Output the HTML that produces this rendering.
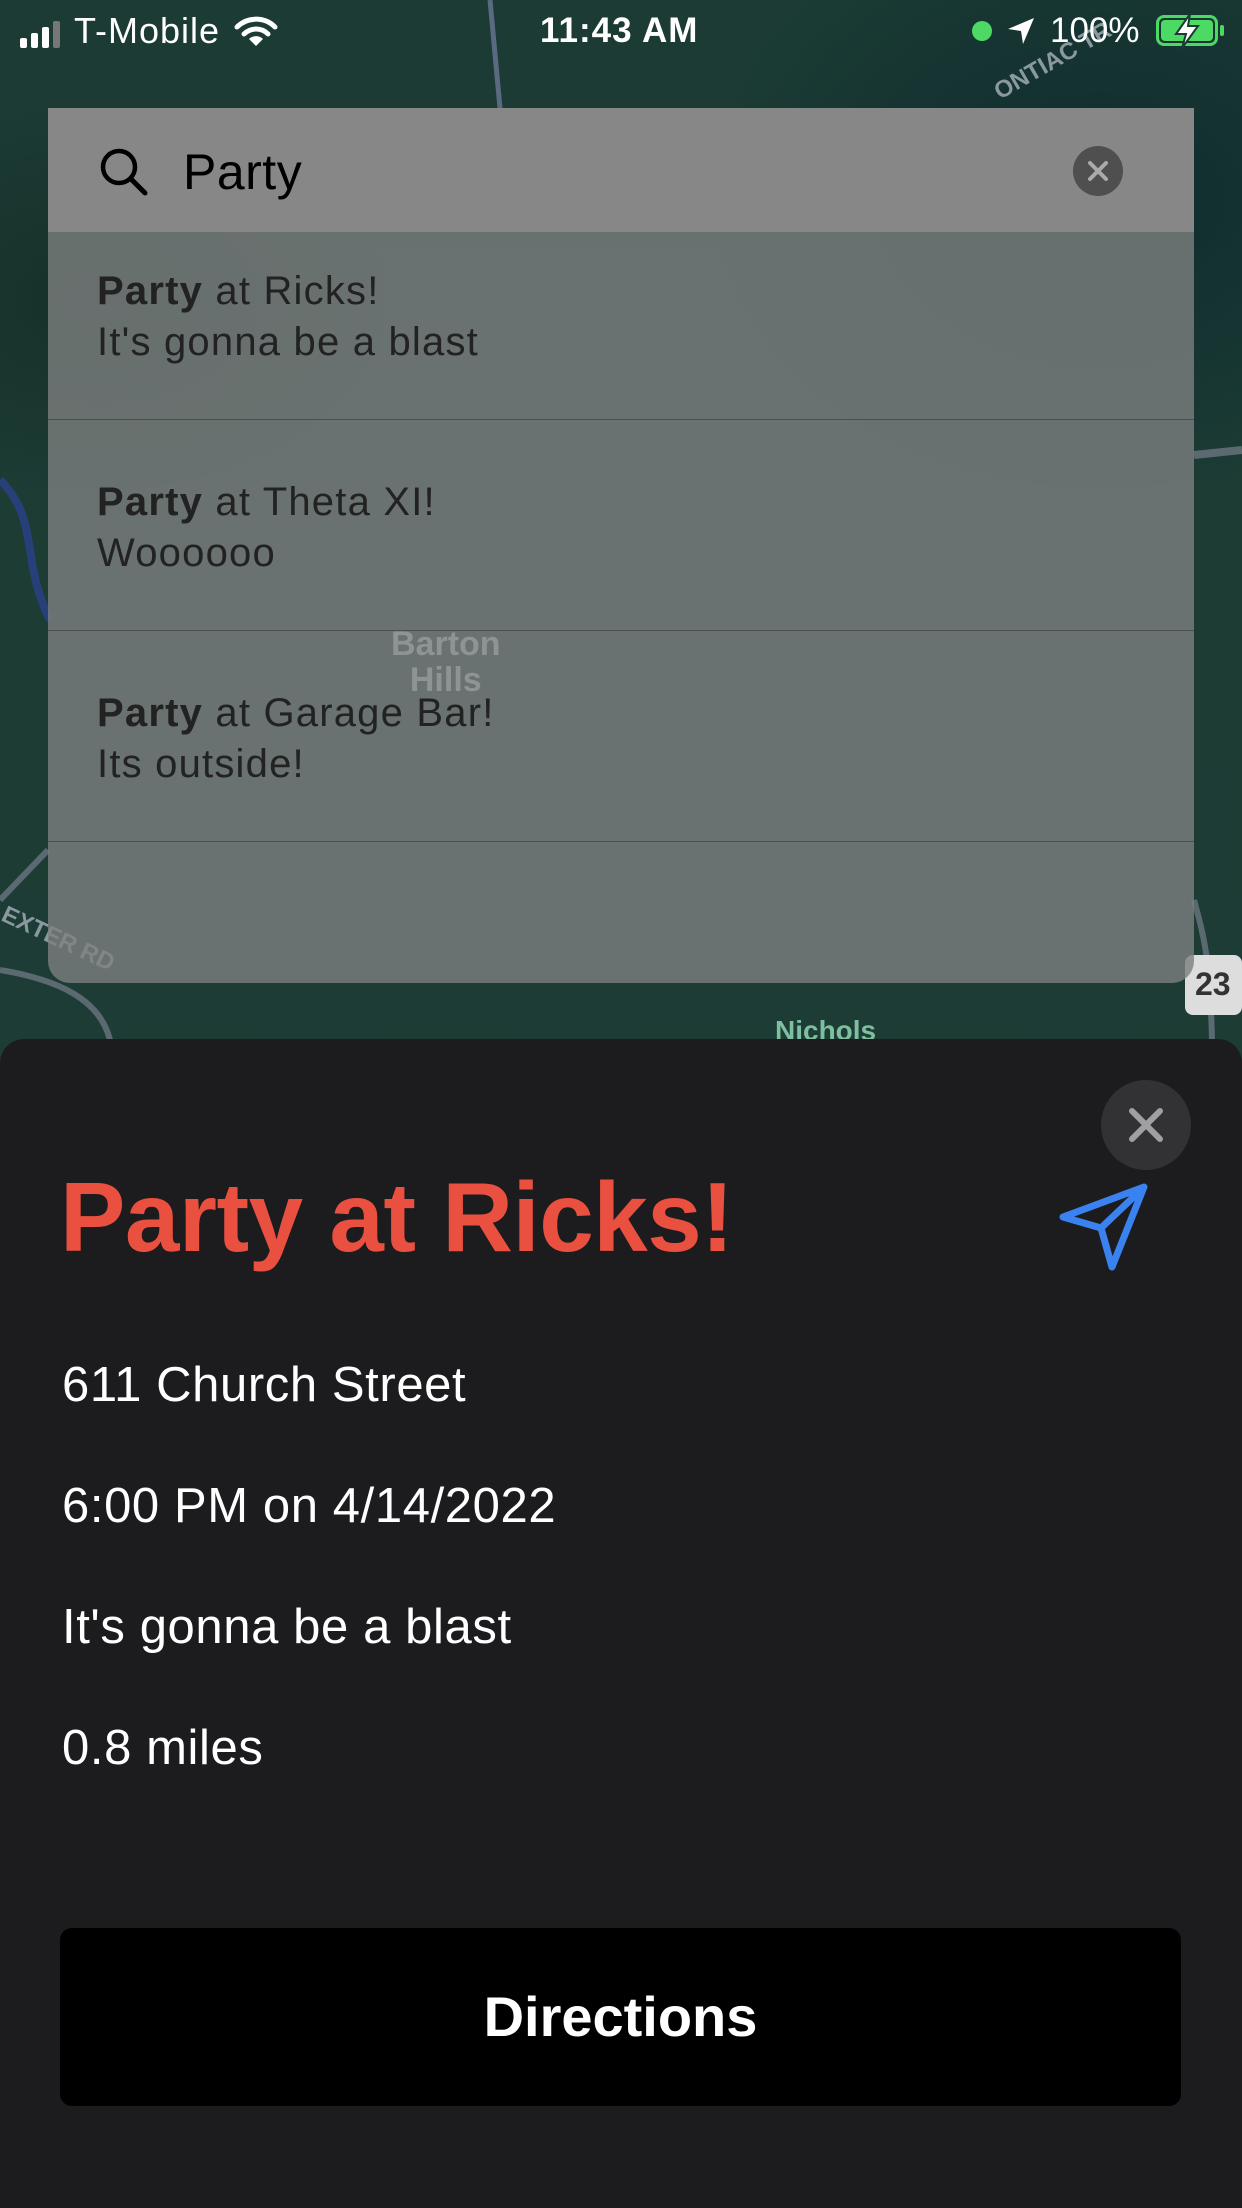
<!DOCTYPE html>
<html><head><meta charset="utf-8"><style>
*{margin:0;padding:0;box-sizing:border-box}
body{width:1242px;height:2208px;position:relative;overflow:hidden;font-family:"Liberation Sans",sans-serif;background:#1a3a33}
.map{position:absolute;inset:0;background:
radial-gradient(ellipse 300px 200px at 100px 300px,#163029,transparent),
radial-gradient(ellipse 400px 300px at 1100px 200px,#0f2c2e,transparent),
linear-gradient(180deg,#1b3b34,#1d3d35 60%,#183530)}
.abs{position:absolute}
.search{left:48px;top:108px;width:1146px;height:124px;background:#878787}
.results{left:48px;top:232px;width:1146px;height:751px;background:rgba(125,128,128,.8);border-radius:0 0 22px 22px}
.row{position:absolute;left:0;width:1146px;border-bottom:1.5px solid #4b4f50}
.rt{position:absolute;left:49px;font-size:40px;color:#222;line-height:51px;letter-spacing:1.2px}
.sheet{left:0;top:1039px;width:1242px;height:1169px;background:#1c1c1e;border-radius:24px 24px 0 0}
.info{position:absolute;left:62px;font-size:49px;color:#fff;letter-spacing:.6px}
</style></head><body>
<div class="map"></div>
<svg class="abs" style="left:0;top:0" width="1242" height="1050">
<path d="M0 480 C40 520 20 560 50 620" stroke="#27407a" stroke-width="8" fill="none"/>
<path d="M1194 455 L1242 450" stroke="#5a6a70" stroke-width="8"/>
<path d="M0 900 L48 850 M0 970 C60 980 100 1000 110 1040" stroke="#5a6a70" stroke-width="6" fill="none"/>
<path d="M490 0 L500 108" stroke="#5a6a80" stroke-width="5"/>
<path d="M1194 900 C1205 940 1210 960 1212 1040" stroke="#5a6a70" stroke-width="6" fill="none"/>
<rect x="1185" y="955" width="57" height="60" rx="8" fill="#ddd"/>
<text x="1195" y="995" font-family="Liberation Sans" font-weight="bold" font-size="32" fill="#333">23</text>
<text x="775" y="1040" font-family="Liberation Sans" font-weight="bold" font-size="28" fill="#7fbf9f">Nichols</text>
<text x="1000" y="100" font-family="Liberation Sans" font-weight="bold" font-size="24" fill="#8a99a0" transform="rotate(-30 1000 100)">ONTIAC TR</text>
<text x="0" y="920" font-family="Liberation Sans" font-weight="bold" font-size="24" fill="#8a99a0" transform="rotate(25 0 920)">EXTER RD</text>
</svg>
<div class="abs" style="left:20px;top:14px;font-size:36px;color:#fff;display:flex;align-items:flex-end;gap:4px">
<span style="display:inline-block;width:7px;height:10px;background:#fff;border-radius:2px"></span>
<span style="display:inline-block;width:7px;height:15px;background:#fff;border-radius:2px"></span>
<span style="display:inline-block;width:7px;height:21px;background:#fff;border-radius:2px"></span>
<span style="display:inline-block;width:7px;height:27px;background:#777;border-radius:2px"></span>
<span style="margin-left:10px;line-height:34px;letter-spacing:1px">T-Mobile</span>
<svg width="44" height="32" viewBox="0 0 44 32" style="margin-left:10px"><path d="M3 11 A27 27 0 0 1 41 11" stroke="#fff" stroke-width="5" fill="none" stroke-linecap="round"/><path d="M10 18 A17 17 0 0 1 34 18" stroke="#fff" stroke-width="5" fill="none" stroke-linecap="round"/><path d="M22 30 L15 23 A10 10 0 0 1 29 23Z" fill="#fff"/></svg>
</div>
<div class="abs" style="left:540px;top:11px;font-size:35px;font-weight:bold;color:#fff;letter-spacing:1px">11:43 AM</div>
<div class="abs" style="left:972px;top:21px;width:20px;height:20px;border-radius:50%;background:#4cd964"></div>
<svg class="abs" style="left:1006px;top:16px" width="30" height="30" viewBox="0 0 30 30"><path d="M28 2 L2 13 L15 15 L17 28Z" fill="#fff"/></svg>
<div class="abs" style="left:1050px;top:11px;font-size:35px;color:#fff">100%</div>
<div class="abs" style="left:1156px;top:15px;width:62px;height:31px;border:3px solid #4cd964;border-radius:8px;padding:2px"><div style="width:100%;height:100%;background:#4cd964;border-radius:4px"></div></div>
<div class="abs" style="left:1220px;top:25px;width:4px;height:11px;background:#4cd964;border-radius:2px"></div>
<svg class="abs" style="left:1170px;top:12px" width="34" height="38" viewBox="0 0 34 38"><path d="M20 2 L6 22 H16 L12 36 L28 14 H18Z" fill="#fff" stroke="#1a3a33" stroke-width="2"/></svg>

<div class="abs search">
<svg class="abs" style="left:50px;top:38px" width="52" height="52" viewBox="0 0 52 52"><circle cx="21" cy="21" r="16" stroke="#000" stroke-width="4.5" fill="none"/><path d="M33 33 L47 47" stroke="#000" stroke-width="5" stroke-linecap="round"/></svg>
<div class="abs" style="left:135px;top:35px;font-size:50px;color:#000;letter-spacing:.5px">Party</div>
<div class="abs" style="left:1025px;top:38px;width:50px;height:50px;border-radius:50%;background:#4f4f4f"><svg width="50" height="50"><path d="M17 17 L33 33 M33 17 L17 33" stroke="#aaa" stroke-width="4" stroke-linecap="round"/></svg></div>
</div>

<div class="abs results">
<div class="row" style="top:0;height:188px"></div>
<div class="row" style="top:188px;height:211px"></div>
<div class="row" style="top:399px;height:211px"></div>
<div class="rt" style="top:34px"><b>Party</b> at Ricks!<br>It's gonna be a blast</div>
<div class="rt" style="top:245px"><b>Party</b> at Theta XI!<br>Woooooo</div>
<div class="rt" style="top:456px"><b>Party</b> at Garage Bar!<br>Its outside!</div>
<div class="abs" style="left:343px;top:394px;font-size:34px;font-weight:bold;color:#8e9494;text-align:center;line-height:36px">Barton<br>Hills</div>
</div>

<div class="abs sheet">
<div class="abs" style="left:1101px;top:41px;width:90px;height:90px;border-radius:50%;background:#323235"><svg width="90" height="90"><path d="M31 31 L59 59 M59 31 L31 59" stroke="#a0a0a4" stroke-width="6" stroke-linecap="round"/></svg></div>
<svg class="abs" style="left:1050px;top:130px" width="110" height="110" viewBox="1050 1169 110 110"><path d="M1144 1187 L1063 1217 L1101 1228 L1112 1267 Z M1101 1228 L1144 1187" stroke="#3a82f0" stroke-width="7" fill="none" stroke-linejoin="round" stroke-linecap="round"/></svg>
<div class="abs" style="left:60px;top:122px;font-size:98px;font-weight:bold;color:#ea5040;letter-spacing:-.5px">Party at Ricks!</div>
<div class="info" style="top:318px">611 Church Street</div>
<div class="info" style="top:439px">6:00 PM on 4/14/2022</div>
<div class="info" style="top:560px">It's gonna be a blast</div>
<div class="info" style="top:681px">0.8 miles</div>
<div class="abs" style="left:60px;top:889px;width:1121px;height:178px;background:#000;border-radius:12px;color:#fff;font-size:56px;font-weight:bold;text-align:center;line-height:178px">Directions</div>
</div>
</body></html>
